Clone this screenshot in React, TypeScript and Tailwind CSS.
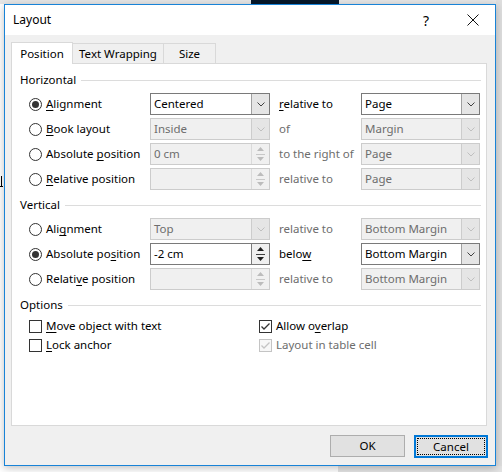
import type { ReactNode } from "react";

const font = "font-['Noto_Sans',sans-serif]";

function Chevron({ disabled }: { disabled?: boolean }) {
  return (
    <svg width="8" height="5" viewBox="0 0 8 5">
      <polyline
        points="0.5,0.5 4,4 7.5,0.5"
        fill="none"
        stroke={disabled ? "#bfbfbf" : "#404040"}
        strokeWidth="1"
      />
    </svg>
  );
}

function Combo({
  value,
  disabled,
  width,
}: {
  value: string;
  disabled?: boolean;
  width: string;
}) {
  return (
    <div
      className={`flex h-[22px] ${width} border ${
        disabled ? "border-[#cccccc] bg-[#f0f0f0] text-[#6d6d6d]" : "border-[#7a7a7a] bg-white text-black"
      }`}
    >
      <div className="flex flex-1 items-center pl-[3px]">{value}</div>
      <div
        className={`flex w-[18px] items-center justify-center border-l ${
          disabled ? "border-[#cccccc] bg-[#e5e5e5]" : "border-[#a0a0a0] bg-[#e5e5e5]"
        }`}
      >
        <Chevron disabled={disabled} />
      </div>
    </div>
  );
}

function Spin({ value, disabled }: { value: string; disabled?: boolean }) {
  const c = disabled ? "#bcbcbc" : "#202020";
  return (
    <div
      className={`flex h-[22px] w-[120px] border ${
        disabled ? "border-[#cccccc] bg-[#f0f0f0] text-[#6d6d6d]" : "border-[#7a7a7a] bg-white text-black"
      }`}
    >
      <div className="flex flex-1 items-center pl-[3px]">{value}</div>
      <div
        className={`flex w-[18px] flex-col border-l ${
          disabled ? "border-[#dadada] bg-[#f0f0f0]" : "border-[#7a7a7a] bg-[#f0f0f0]"
        }`}
      >
        <div className="flex flex-1 items-center justify-center">
          <svg width="7" height="4" viewBox="0 0 7 4">
            <polygon points="0,4 3.5,0 7,4" fill={c} />
          </svg>
        </div>
        <div className={`mx-[4px] h-px ${disabled ? "bg-[#c8c8c8]" : "bg-[#404040]"}`} />
        <div className="flex flex-1 items-center justify-center">
          <svg width="7" height="4" viewBox="0 0 7 4">
            <polygon points="0,0 3.5,4 7,0" fill={c} />
          </svg>
        </div>
      </div>
    </div>
  );
}

function Radio({ checked }: { checked?: boolean }) {
  return (
    <svg width="13" height="13" viewBox="0 0 13 13" className="shrink-0">
      <circle cx="6.5" cy="6.5" r="6" fill="white" stroke="#333333" strokeWidth="1" />
      {checked && <circle cx="6.5" cy="6.5" r="3.5" fill="#333333" />}
    </svg>
  );
}

function Check({ checked, disabled }: { checked?: boolean; disabled?: boolean }) {
  const c = disabled ? "#c4c4c4" : "#333333";
  return (
    <svg width="13" height="13" viewBox="0 0 13 13" className="shrink-0">
      <rect x="0.5" y="0.5" width="12" height="12" fill={disabled ? "#f7f7f7" : "white"} stroke={c} />
      {checked && (
        <polyline points="2.5,6.5 5,9 10.5,3.5" fill="none" stroke={c} strokeWidth="1.3" />
      )}
    </svg>
  );
}

function GroupLabel({ children }: { children: ReactNode }) {
  return (
    <div className="flex h-[16px] items-center">
      <span>{children}</span>
      <div className="ml-[5px] h-px flex-1 bg-[#dcdcdc]" />
    </div>
  );
}

function Row({
  checked,
  label,
  field,
  mid,
  midDisabled,
  right,
}: {
  checked?: boolean;
  label: ReactNode;
  field: ReactNode;
  mid: ReactNode;
  midDisabled?: boolean;
  right: ReactNode;
}) {
  return (
    <div className="ml-[9px] flex h-[22px] items-center">
      <div className="flex w-[121px] items-center gap-[4px]">
        <Radio checked={checked} />
        <span className="whitespace-nowrap">{label}</span>
      </div>
      {field}
      <div className={`ml-[9px] w-[82px] whitespace-nowrap ${midDisabled ? "text-[#6d6d6d]" : ""}`}>{mid}</div>
      {right}
    </div>
  );
}

const U = ({ children }: { children: ReactNode }) => (
  <span className="underline underline-offset-2">{children}</span>
);

export default function App() {
  return (
    <div className={`relative h-[472px] w-[502px] overflow-hidden bg-white text-[11.5px] text-black ${font}`}>
      {/* desktop behind the dialog */}
      <div className="absolute left-0 top-0 h-[4px] w-full bg-[#e6e6e6]" />
      <div className="absolute left-[251px] top-0 h-[4px] w-[88px] bg-[#06182a]" />
      <div className="absolute right-0 top-0 h-full w-[6px] bg-[#dedede]" />
      <div className="absolute bottom-0 left-[338px] h-[6px] w-full bg-[#e3e3e3]" />
      <div className="absolute left-[1px] top-[176px] h-[11px] w-px bg-black" />
      <div className="absolute left-0 top-[186px] h-px w-[3px] bg-black" />

      <div className="relative ml-[4px] mt-[4px] flex h-[462px] w-[492px] flex-col border border-[#1883d7] bg-[#f0f0f0] shadow-[0_2px_8px_rgba(0,0,0,0.25)]">
        <div className="flex h-[30px] items-center bg-white pl-[8px]">
          <span className="text-[12px]">Layout</span>
          <span className="ml-auto mr-[38px] text-[14px]">?</span>
          <svg width="12" height="12" viewBox="0 0 12 12" className="mr-[16px]">
            <path d="M0.5 0.5 L11.5 11.5 M11.5 0.5 L0.5 11.5" stroke="#111" strokeWidth="1" />
          </svg>
        </div>

        <div className="flex flex-1 flex-col px-[6px] pt-[7px]">
          <div className="flex items-end">
            <div className="relative z-10 -mb-px flex h-[22px] w-[62px] items-center justify-center border border-b-0 border-[#d9d9d9] bg-white">
              Position
            </div>
            <div className="flex h-[20px] w-[91px] items-center justify-center border border-b-0 border-l-0 border-[#d9d9d9] bg-[#f0f0f0]">
              Text Wrapping
            </div>
            <div className="flex h-[20px] w-[52px] items-center justify-center border border-b-0 border-l-0 border-[#d9d9d9] bg-[#f0f0f0]">
              Size
            </div>
          </div>

          <div className="flex h-[363px] w-[476px] flex-col border border-[#d9d9d9] bg-white pl-[8px] pr-[5px] pt-[8px]">
            <GroupLabel>Horizontal</GroupLabel>
            <div className="mt-[5px] flex flex-col gap-[3px]">
              <Row
                checked
                label={<><U>A</U>lignment</>}
                field={<Combo value="Centered" width="w-[120px]" />}
                mid={<><U>r</U>elative to</>}
                right={<Combo value="Page" width="w-[119px]" />}
              />
              <Row
                label={<><U>B</U>ook layout</>}
                field={<Combo value="Inside" disabled width="w-[120px]" />}
                mid="of"
                midDisabled
                right={<Combo value="Margin" disabled width="w-[119px]" />}
              />
              <Row
                label={<>Absolute <U>p</U>osition</>}
                field={<Spin value="0 cm" disabled />}
                mid="to the right of"
                midDisabled
                right={<Combo value="Page" disabled width="w-[119px]" />}
              />
              <Row
                label={<><U>R</U>elative position</>}
                field={<Spin value="" disabled />}
                mid="relative to"
                midDisabled
                right={<Combo value="Page" disabled width="w-[119px]" />}
              />
            </div>

            <div className="mt-[7px]">
              <GroupLabel>Vertical</GroupLabel>
            </div>
            <div className="mt-[5px] flex flex-col gap-[3px]">
              <Row
                label={<>Ali<U>g</U>nment</>}
                field={<Combo value="Top" disabled width="w-[120px]" />}
                mid="relative to"
                midDisabled
                right={<Combo value="Bottom Margin" disabled width="w-[119px]" />}
              />
              <Row
                checked
                label={<>Absolute po<U>s</U>ition</>}
                field={<Spin value="-2 cm" />}
                mid={<>belo<U>w</U></>}
                right={<Combo value="Bottom Margin" width="w-[119px]" />}
              />
              <Row
                label={<>Relati<U>v</U>e position</>}
                field={<Spin value="" disabled />}
                mid="relative to"
                midDisabled
                right={<Combo value="Bottom Margin" disabled width="w-[119px]" />}
              />
            </div>

            <div className="mt-[7px]">
              <GroupLabel>Options</GroupLabel>
            </div>
            <div className="ml-[9px] mt-[5px] grid grid-cols-[230px_1fr] gap-y-[3px]">
              <div className="flex h-[16px] items-center gap-[4px]">
                <Check />
                <span><U>M</U>ove object with text</span>
              </div>
              <div className="flex h-[16px] items-center gap-[4px]">
                <Check checked />
                <span>Allow o<U>v</U>erlap</span>
              </div>
              <div className="flex h-[16px] items-center gap-[4px]">
                <Check />
                <span><U>L</U>ock anchor</span>
              </div>
              <div className="flex h-[16px] items-center gap-[4px] text-[#6d6d6d]">
                <Check checked disabled />
                <span>Layout in table cell</span>
              </div>
            </div>
          </div>

          <div className="mt-[9px] flex justify-end gap-[9px] pr-[1px]">
            <button className="flex h-[22px] w-[75px] items-center justify-center border border-[#adadad] bg-[#e1e1e1]">
              OK
            </button>
            <button className="flex h-[23px] w-[74px] items-center justify-center border-2 border-[#0078d7] bg-[#e1e1e1] p-[1px]">
              <span className="flex h-full w-full items-center justify-center border border-dotted border-black">
                Cancel
              </span>
            </button>
          </div>
        </div>
      </div>
    </div>
  );
}
